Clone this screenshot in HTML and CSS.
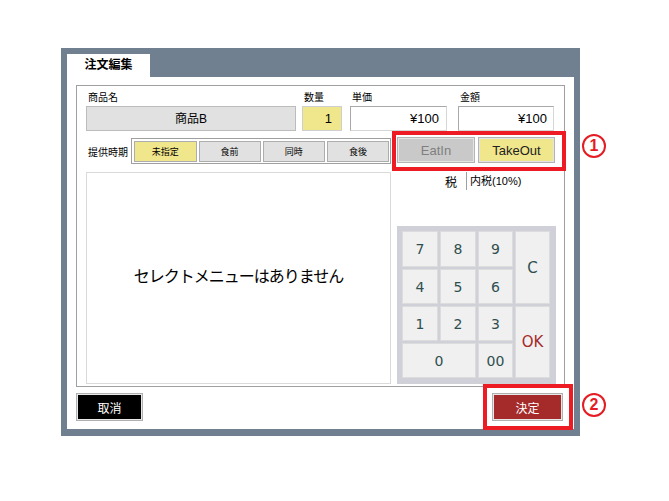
FILE: index.html
```html
<!DOCTYPE html>
<html lang="ja">
<head>
<meta charset="utf-8">
<title>注文編集</title>
<link rel="stylesheet" href="styles.css">
</head>
<body>
<div class="page">
  <div class="frame">
    <div class="tabs"><div class="tab">注文編集</div></div>
    <div class="sheet">
      <div class="panel">
        <div class="row1">
          <div class="field">
            <div class="lbl">商品名</div>
            <div class="box name">商品B</div>
          </div>
          <div class="field">
            <div class="lbl">数量</div>
            <div class="box qty">1</div>
          </div>
          <div class="field">
            <div class="lbl">単価</div>
            <div class="box price unit">¥100</div>
          </div>
          <div class="field">
            <div class="lbl">金額</div>
            <div class="box price amount">¥100</div>
          </div>
        </div>
        <div class="row2">
          <div class="lbl2">提供時期</div>
          <div class="group">
            <div class="seg on w63">未指定</div>
            <div class="seg w62">食前</div>
            <div class="seg w63">同時</div>
            <div class="seg w62">食後</div>
          </div>
          <div class="toggles">
            <div class="tg eatin">EatIn</div>
            <div class="tg takeout">TakeOut</div>
          </div>
        </div>
        <div class="row3">
          <div class="menu">セレクトメニューはありません</div>
          <div class="side">
            <div class="tax"><span class="taxlbl">税</span><span class="taxval">内税(10%)</span></div>
            <div class="pad">
              <div class="k">7</div>
              <div class="k">8</div>
              <div class="k">9</div>
              <div class="k kc">C</div>
              <div class="k">4</div>
              <div class="k">5</div>
              <div class="k">6</div>
              <div class="k">1</div>
              <div class="k">2</div>
              <div class="k">3</div>
              <div class="k kok">OK</div>
              <div class="k kzero">0</div>
              <div class="k">00</div>
            </div>
          </div>
        </div>
      </div>
      <div class="footer">
        <div class="btn cancel">取消</div>
        <div class="btn decide">決定</div>
      </div>
    </div>
  </div>
  <div class="mark m1"></div>
  <div class="mark m2"></div>
  <div class="num n1">1</div>
  <div class="num n2">2</div>
</div>
</body>
</html>
```
FILE: styles.css
```css
html, body {
  margin: 0;
  padding: 0;
  background: #ffffff;
}
body {
  font-family: "Liberation Sans", "Noto Sans CJK JP", sans-serif;
  color: #000;
}
.page {
  position: relative;
  width: 669px;
  height: 501px;
  box-sizing: border-box;
  padding: 48px 0 0 61px;
}
.frame {
  width: 519px;
  height: 388px;
  box-sizing: border-box;
  padding: 6px 6px 7px 6px;
  background: #708090;
  display: flex;
  flex-direction: column;
}
.tabs {
  height: 23px;
  display: flex;
  flex: none;
}
.tab {
  width: 83px;
  background: #fff;
  box-sizing: border-box;
  text-align: center;
  font-size: 12px;
  font-weight: bold;
  line-height: 23px;
}
.sheet {
  flex: 1;
  background: #fff;
  padding: 8px 9px 0 9px;
  display: flex;
  flex-direction: column;
}
.panel {
  height: 302px;
  flex: none;
  box-sizing: border-box;
  border: 1px solid #a0a0a0;
  padding: 5px 0 0 9px;
}
.row1 {
  display: flex;
}
.field {
  display: flex;
  flex-direction: column;
}
.lbl {
  height: 15px;
  font-size: 10px;
  line-height: 14px;
  padding-left: 2px;
}
.box {
  height: 25px;
  box-sizing: border-box;
  display: flex;
  align-items: center;
  line-height: 1;
}
.name {
  width: 210px;
  margin-right: 6px;
  background: #e1e1e1;
  border: 1px solid #bcbcbc;
  justify-content: center;
  font-size: 12px;
}
.qty {
  width: 40px;
  margin-right: 8px;
  background: #f0e68c;
  border: 1px solid #cfcfcf;
  justify-content: flex-end;
  padding-right: 9px;
  font-size: 13px;
}
.price {
  background: #fff;
  border: 1px solid #d6d6d6;
  border-top-color: #a9a9a9;
  border-left-color: #a9a9a9;
  justify-content: flex-end;
  font-size: 13px;
}
.unit {
  width: 97px;
  margin-right: 11px;
  padding-right: 7px;
}
.amount {
  width: 96px;
  padding-right: 6px;
}
.row2 {
  display: flex;
  align-items: center;
  height: 26px;
  margin-top: 7px;
}
.lbl2 {
  width: 45px;
  box-sizing: border-box;
  padding-left: 2px;
  font-size: 10px;
}
.group {
  width: 260px;
  height: 26px;
  box-sizing: border-box;
  border: 1px solid #a0a0a0;
  padding: 2px 1px 1px 2px;
  display: flex;
  gap: 2px;
}
.seg {
  height: 21px;
  box-sizing: border-box;
  background: #e1e1e1;
  border: 1px solid #adadad;
  font-size: 9px;
  display: flex;
  align-items: center;
  justify-content: center;
}
.w63 { width: 63px; }
.w62 { width: 62px; }
.seg.on {
  background: #f0e68c;
}
.toggles {
  display: flex;
  gap: 3px;
  margin-left: 6px;
  margin-top: -2px;
}
.tg {
  height: 26px;
  box-sizing: border-box;
  border: 1px solid #b4b4b4;
  box-shadow: inset 0 0 0 1px #e4e4e4;
  font-size: 13px;
  display: flex;
  align-items: center;
  justify-content: center;
}
.eatin {
  width: 78px;
  background: #c9c9c9;
  color: #7f7f7f;
}
.takeout {
  width: 77px;
  background: #f0e68c;
  color: #222;
}
.row3 {
  display: flex;
  margin-top: 8px;
}
.menu {
  width: 305px;
  height: 212px;
  box-sizing: border-box;
  border: 1px solid #dadada;
  padding-bottom: 6px;
  display: flex;
  align-items: center;
  justify-content: center;
  font-family: "Noto Sans CJK JP", sans-serif;
  font-size: 16px;
  letter-spacing: -1px;
}
.side {
  width: 159px;
  margin-left: 6px;
  display: flex;
  flex-direction: column;
}
.tax {
  height: 18px;
  display: flex;
  align-items: center;
  font-size: 12px;
}
.taxlbl {
  margin-left: 48px;
  width: 12px;
}
.taxval {
  margin-left: 9px;
  border-left: 1px solid #a0a0a0;
  height: 18px;
  line-height: 18px;
  padding-left: 3px;
  font-size: 11px;
}
.pad {
  margin-top: 36px;
  height: 158px;
  box-sizing: border-box;
  background: #d0d1d8;
  padding: 5px 6px 6px 5px;
  display: grid;
  grid-template-columns: 36px 36px 35px 35px;
  grid-template-rows: 36px 35px 35px 35px;
  column-gap: 2px;
  row-gap: 2px;
}
.k {
  background: #f0f0f0;
  border: 1px solid #dcdcdc;
  color: #2f4f4f;
  font-family: "DejaVu Sans", sans-serif;
  font-size: 14px;
  display: flex;
  align-items: center;
  justify-content: center;
}
.kc {
  grid-column: 4;
  grid-row: 1 / span 2;
  font-size: 15px;
}
.kok {
  grid-column: 4;
  grid-row: 3 / span 2;
  color: #a52a2a;
  font-size: 15px;
}
.kzero {
  grid-column: 1 / span 2;
}
.footer {
  display: flex;
  justify-content: space-between;
  margin-top: 6px;
  padding-right: 2px;
}
.btn {
  height: 28px;
  box-sizing: border-box;
  border: 1px solid #b0b0b0;
  box-shadow: inset 0 0 0 1px #e8e8e8;
  color: #fff;
  font-size: 12px;
  display: flex;
  align-items: center;
  justify-content: center;
}
.cancel {
  width: 67px;
  background: #000;
}
.decide {
  width: 71px;
  background: #a52a2a;
}
.mark {
  position: absolute;
  box-sizing: border-box;
  border: 4px solid #ed1c24;
}
.m1 {
  left: 392px;
  top: 131px;
  width: 174px;
  height: 40px;
}
.m2 {
  left: 483px;
  top: 384px;
  width: 90px;
  height: 46px;
}
.num {
  position: absolute;
  width: 24px;
  height: 24px;
  box-sizing: border-box;
  border: 2.5px solid #e51c23;
  border-radius: 50%;
  color: #e51c23;
  font-family: "Liberation Sans", sans-serif;
  font-weight: bold;
  font-size: 16px;
  line-height: 1;
  display: flex;
  align-items: center;
  justify-content: center;
}
.n1 {
  left: 582px;
  top: 134px;
}
.n2 {
  left: 582px;
  top: 393px;
}
```
